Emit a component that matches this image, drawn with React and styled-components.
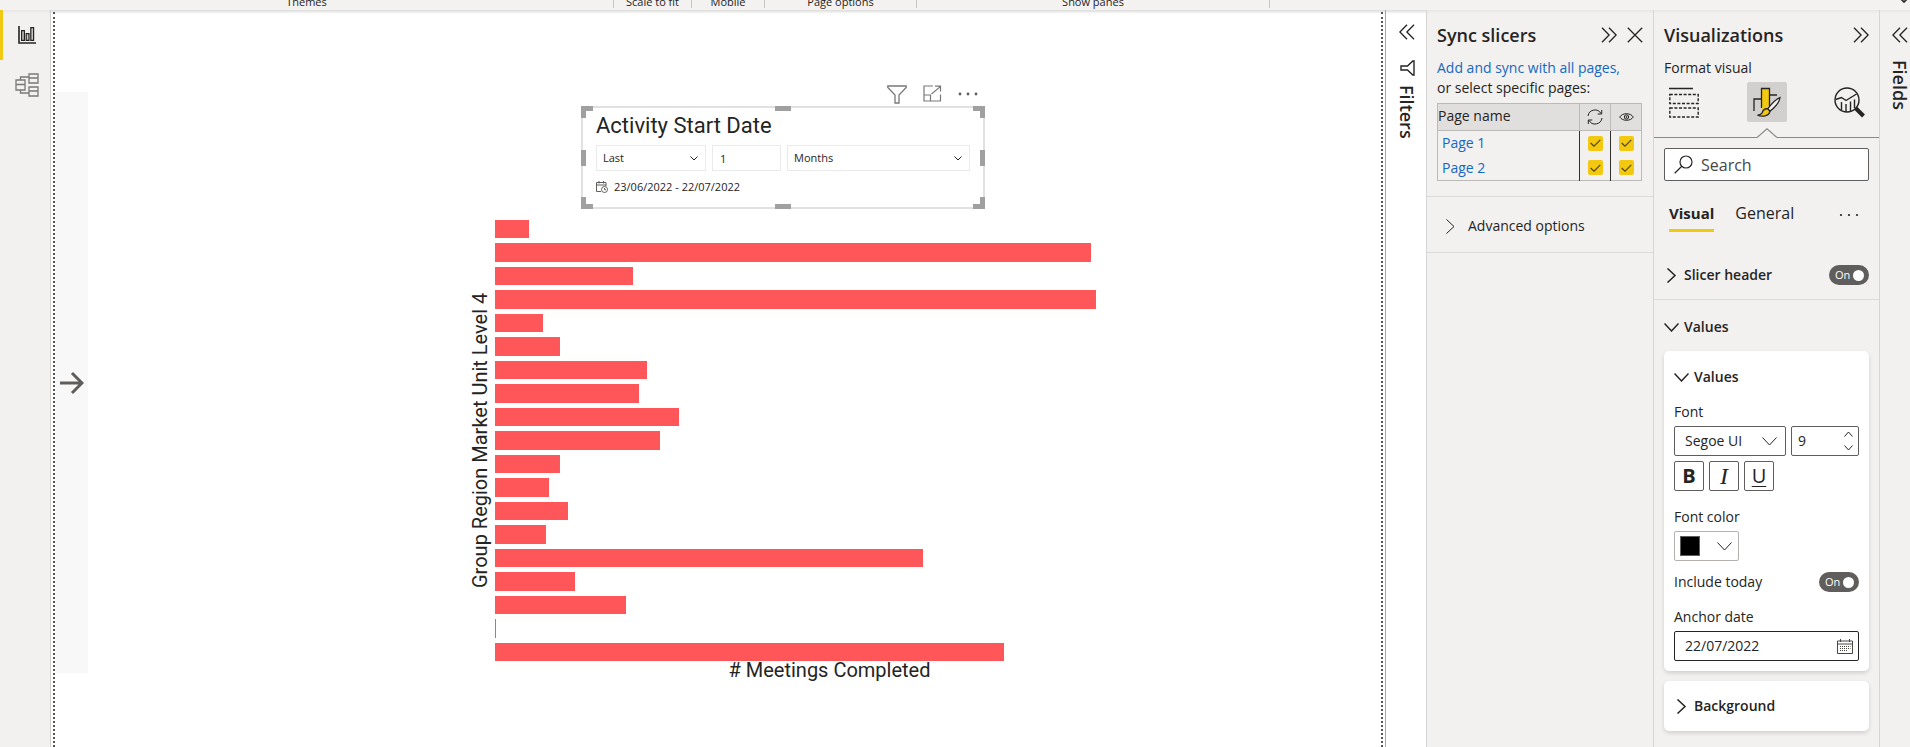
import React, { useState } from "react";
import styled, { createGlobalStyle, css } from "styled-components";

const GlobalStyle = createGlobalStyle`
  *, *::before, *::after { box-sizing: border-box; }
  body {
    margin: 0;
    background: #ffffff;
    color: #252423;
    font-family: "Open Sans", "Noto Sans", sans-serif;
    font-size: 14px;
    line-height: 20px;
  }
  button, input, select { font: inherit; color: inherit; }
  svg { display: block; fill: none; stroke: currentColor; }
`;

/* ---------- Shell ---------- */

const Shell = styled.div`
  display: flex;
  flex-direction: column;
  min-height: 100vh;
`;

const Ribbon = styled.header`
  display: flex;
  height: 10px;
  overflow: hidden;
  background: #f3f2f1;
  font-size: 11px;
  line-height: 12px;
`;

const RibbonGroup = styled.div`
  width: ${(p) => p.$width}px;
  height: 8px;
  display: flex;
  align-items: flex-end;
  justify-content: center;
  border-right: 1px solid #c8c6c4;
  white-space: nowrap;
`;

const RibbonToggle = styled.button`
  margin-left: auto;
  padding: 0 2px;
  height: 3px;
  border: 0;
  background: none;
`;

const Body = styled.div`
  flex: 1;
  display: flex;
  box-shadow: inset 0 4px 3px -2px #dcdbda;
`;

const IconButton = styled.button`
  display: grid;
  place-items: center;
  padding: 0;
  border: 0;
  background: none;
  color: ${(p) => p.$color || "#252423"};
`;

/* ---------- View switcher ---------- */

const ViewRail = styled.nav`
  flex: none;
  width: 51px;
  background: rgba(237, 235, 233, 0.7);
  border-right: 1px solid #d2d0ce;
`;

const ViewButton = styled.button`
  display: grid;
  place-items: center;
  width: 100%;
  height: 50px;
  padding: 0;
  border: 0;
  border-left: 3px solid ${(p) => (p.$active ? "#f2c811" : "transparent")};
  background: none;
  color: ${(p) => (p.$active ? "#252423" : "#7a7876")};
`;

/* ---------- Report canvas ---------- */

const Canvas = styled.main`
  flex: 1;
  min-width: 0;
  display: flex;
  margin: 2px 2px 0;
  border: 0 dotted #555555;
  border-width: 0 2px;
`;

const DrawerStrip = styled.aside`
  flex: none;
  display: grid;
  place-items: center;
  width: 33px;
  height: 581px;
  margin-top: 80px;
  background: #f8f8f8;
`;

const Report = styled.div`
  flex: 1;
  min-width: 0;
  padding: 70px 217px 0 383px;
`;

const Slicer = styled.section`
  width: 404px;
  margin-left: 110px;
`;

const VisualActions = styled.div`
  display: flex;
  justify-content: flex-end;
  gap: 16px;
  height: 24px;
  padding: 3px 7px 0 0;
  align-items: flex-start;
`;

const SlicerFrame = styled.div`
  position: relative;
  height: 103px;
  padding: 6px 13px 0;
  border: 2px solid #e1e1e1;
`;

const handleSpots = {
  nw: "left:-2px;top:-2px;border-width:5px 0 0 5px;width:12px;height:12px;",
  ne: "right:-2px;top:-2px;border-width:5px 5px 0 0;width:12px;height:12px;",
  sw: "left:-2px;bottom:-2px;border-width:0 0 5px 5px;width:12px;height:12px;",
  se: "right:-2px;bottom:-2px;border-width:0 5px 5px 0;width:12px;height:12px;",
  n: "left:calc(50% - 8px);top:-2px;border-width:5px 0 0;width:16px;height:5px;",
  s: "left:calc(50% - 8px);bottom:-2px;border-width:0 0 5px;width:16px;height:5px;",
  w: "left:-2px;top:calc(50% - 8px);border-width:0 0 0 5px;width:5px;height:16px;",
  e: "right:-2px;top:calc(50% - 8px);border-width:0 5px 0 0;width:5px;height:16px;",
};

const Handle = styled.span`
  position: absolute;
  border: 0 solid #a0a0a0;
  ${(p) => handleSpots[p.$at]}
`;

const SlicerTitle = styled.h2`
  margin: 0 0 7px;
  font: 400 22px/24px Roboto, sans-serif;
`;

const SlicerFields = styled.div`
  display: flex;
  gap: 6px;
  font-size: 11px;
`;

const SlicerRange = styled.div`
  display: flex;
  align-items: center;
  gap: 6px;
  margin-top: 6px;
  font-size: 11px;
`;

/* ---------- Shared form parts ---------- */

const boxLook = css`
  border: 1px solid ${(p) => p.$line || "#605e5c"};
  border-radius: ${(p) => (p.$flat ? 0 : 2)}px;
  background: #ffffff;
`;

const SelectBox = styled.div`
  display: grid;
  flex: ${(p) => (p.$width ? "none" : 1)};
  width: ${(p) => (p.$width ? `${p.$width}px` : "auto")};
  height: ${(p) => p.$height || 30}px;
  align-items: center;
  ${boxLook}
  > * { grid-area: 1 / 1; }
  > svg { justify-self: end; margin-right: ${(p) => (p.$flat ? 7 : 8)}px; pointer-events: none; }
`;

const Select = styled.select`
  appearance: none;
  width: 100%;
  height: 100%;
  padding: 0 20px 0 ${(p) => p.$inset || 6}px;
  border: 0;
  background: none;
`;

const TextBox = styled.input`
  width: ${(p) => p.$width}px;
  height: 26px;
  padding: 0 7px;
  ${boxLook}
`;

/* ---------- Bar chart ---------- */

const Chart = styled.figure`
  display: grid;
  grid-template-columns: 24px 1fr;
  grid-template-rows: 441px auto;
  margin: 11px 0 0;
  font: 400 20px/18px Roboto, sans-serif;
`;

const AxisY = styled.div`
  writing-mode: vertical-rl;
  transform: rotate(180deg);
  text-align: center;
`;

const AxisX = styled.figcaption`
  grid-column: 2;
  text-align: center;
`;

const Bars = styled.div`
  display: grid;
  grid-auto-rows: 1fr;
  gap: 5px;
`;

const Bar = styled.div`
  background: #ff5659;
`;

/* ---------- Panes ---------- */

const Rail = styled.aside`
  flex: none;
  display: flex;
  flex-direction: column;
  align-items: center;
  gap: ${(p) => p.$gap}px;
  width: ${(p) => p.$width}px;
  padding: ${(p) => p.$pad};
  border-left: 1px solid ${(p) => p.$line};
  background: ${(p) => p.$fill || "transparent"};
`;

const RailTitle = styled.h2`
  display: flex;
  align-items: center;
  gap: 9px;
  margin: 0;
  writing-mode: vertical-rl;
  font-size: 18px;
  font-weight: 600;
  line-height: 20px;
`;

const Pane = styled.aside`
  flex: none;
  width: ${(p) => p.$width}px;
  border-left: 1px solid #d8d6d4;
  background: rgba(237, 235, 233, 0.7);
`;

const PaneHead = styled.div`
  display: flex;
  align-items: center;
  gap: 10px;
  padding: 12px 10px 0;
  height: 38px;
`;

const PaneTitle = styled.h2`
  flex: 1;
  margin: 0;
  font-size: 18px;
  font-weight: 600;
  line-height: 24px;
`;

const Divided = styled.div`
  padding: ${(p) => p.$pad};
  border-bottom: 1px solid #dddbd9;
`;

const Section = styled.div`
  padding: 17px 10px 14px;
`;

const Link = styled.a`
  color: #1568c0;
  text-decoration: none;
`;

const PageTable = styled.table`
  width: 205px;
  margin-top: 5px;
  border: 1px solid #bcbab8;
  border-collapse: collapse;
  th, td { padding: 0; font-weight: 400; text-align: left; }
  th { height: 27px; background: #e1dfdd; vertical-align: middle; border-bottom: 1px solid #bcbab8; }
  th:first-child { padding-bottom: 3px; }
  th + th { width: 31px; border-left: 1px solid #bcbab8; }
  th svg, td label { margin: 0 auto; }
  td { height: 25px; padding-left: 4px; }
  td + td { padding: 0; border-left: 1px solid #33312f; }
`;

const Tick = styled.label`
  display: grid;
  place-items: center;
  width: 15px;
  height: 15px;
  > * { grid-area: 1 / 1; }
  > svg { z-index: 1; pointer-events: none; color: #4f420a; }
`;

const TickInput = styled.input`
  appearance: none;
  width: 15px;
  height: 15px;
  margin: 0;
  border-radius: 2px;
  background: #f2c811;
`;

const FoldButton = styled.button`
  display: flex;
  align-items: center;
  gap: ${(p) => p.$gap || 5}px;
  height: 20px;
  padding: 0;
  border: 0;
  background: none;
  font-weight: ${(p) => (p.$plain ? 400 : 600)};
  > svg { width: 15px; }
`;

const SubTitle = styled.h3`
  margin: 10px 10px 0;
  font-size: 14px;
  font-weight: 500;
  line-height: 20px;
`;

const ModeBar = styled.div`
  display: flex;
  justify-content: space-between;
  padding: 4px 10px 0;
`;

const ModeButton = styled.button`
  display: grid;
  place-items: center;
  width: 40px;
  height: 40px;
  padding: 0;
  border: 0;
  border-radius: 2px;
  background: ${(p) => (p.$active ? "#d2d0ce" : "none")};
`;

const Notch = styled.div`
  display: flex;
  align-items: flex-end;
  height: 16px;
  color: #8a8886;
  &::before, &::after { content: ""; flex: 1; border-bottom: 1px solid #8a8886; }
`;

const SearchBox = styled.label`
  display: flex;
  align-items: center;
  gap: 8px;
  height: 33px;
  margin: 10px 10px 0;
  padding: 0 9px;
  ${boxLook}
`;

const SearchInput = styled.input`
  flex: 1;
  min-width: 0;
  padding: 0;
  border: 0;
  background: none;
  font-size: 16px;
  &::placeholder { color: #484644; opacity: 1; }
`;

const Tabs = styled.div`
  display: flex;
  align-items: center;
  gap: 21px;
  margin: 20px 20px 0 15px;
  > :last-child { margin-left: auto; }
`;

const Tab = styled.button`
  height: 31px;
  padding: 0 0 4px;
  border: 0;
  border-bottom: 3px solid ${(p) => (p.$active ? "#f2c811" : "transparent")};
  background: none;
  font-size: ${(p) => (p.$active ? 15 : 16)}px;
  font-weight: ${(p) => (p.$active ? 700 : 400)};
  line-height: 24px;
`;

const Row = styled.div`
  display: flex;
  align-items: center;
  justify-content: ${(p) => (p.$spread ? "space-between" : "flex-start")};
  gap: 5px;
  margin-top: ${(p) => p.$top || 0}px;
`;

const Switch = styled.label`
  display: flex;
  align-items: center;
  justify-content: space-between;
  width: 40px;
  height: 20px;
  padding: 0 5px 0 6px;
  border-radius: 10px;
  background: #605e5c;
  color: #ffffff;
  font-size: 11px;
  line-height: 20px;
`;

const SwitchInput = styled.input`
  appearance: none;
  width: 11px;
  height: 11px;
  margin: 0;
  border-radius: 50%;
  background: #ffffff;
`;

const Card = styled.section`
  margin: 0 10px 10px;
  padding: ${(p) => p.$pad};
  border-radius: 5px;
  background: #ffffff;
  box-shadow: 0 2px 4px rgba(0, 0, 0, 0.14);
`;

const FieldLabel = styled.label`
  display: block;
  margin: ${(p) => p.$top || 0}px 0 4px;
`;

const Spinner = styled.div`
  display: flex;
  align-items: center;
  justify-content: space-between;
  flex: 1;
  min-width: 0;
  height: 30px;
  padding: 0 5px 0 6px;
  ${boxLook}
`;

const BareInput = styled.input`
  flex: 1;
  width: 20px;
  min-width: 0;
  padding: 0;
  border: 0;
  background: none;
`;

const StepButtons = styled.div`
  display: grid;
  gap: 8px;
`;

const StyleButton = styled.button`
  width: 30px;
  height: 30px;
  padding: 0;
  font-size: ${(p) => (p.$kind === "italic" ? 24 : 20)}px;
  line-height: 26px;
  ${boxLook}
  font-weight: ${(p) => (p.$kind === "bold" ? 700 : 400)};
  font-style: ${(p) => (p.$kind === "italic" ? "italic" : "normal")};
  font-family: ${(p) => (p.$kind === "italic" ? '"Liberation Serif", serif' : "inherit")};
  text-decoration: ${(p) => (p.$kind === "underline" ? "underline" : "none")};
  text-decoration-thickness: 1px;
  text-underline-offset: 3px;
`;

const ColorButton = styled.button`
  display: flex;
  align-items: center;
  justify-content: space-between;
  width: 65px;
  height: 30px;
  padding: 0 6px 0 5px;
  ${boxLook}
`;

const Swatch = styled.span`
  width: 20px;
  height: 20px;
  border: 1px solid #605e5c;
  background: #000000;
`;

const DateBox = styled.div`
  display: flex;
  align-items: center;
  height: 30px;
  padding: 0 5px 0 10px;
  ${boxLook}
`;

/* ---------- Icons ---------- */

const Chevron = ({ dir = "down", size = 15, weight = 1 }) => {
  const flat = dir === "down" || dir === "up";
  const w = flat ? size : Math.round(size / 2) + 1;
  const h = flat ? Math.round(size / 2) + 1 : size;
  const d = {
    down: `M.5 .5L${w / 2} ${h - 1}L${w - 0.5} .5`,
    up: `M.5 ${h - 0.5}L${w / 2} 1L${w - 0.5} ${h - 0.5}`,
    right: `M.5 .5L${w - 1} ${h / 2}L.5 ${h - 0.5}`,
  }[dir];
  return (
    <svg width={w} height={h} viewBox={`0 0 ${w} ${h}`} strokeWidth={weight} aria-hidden="true">
      <path d={d} />
    </svg>
  );
};

const DoubleChevron = ({ left }) => (
  <svg width="16" height="16" viewBox="0 0 16 16" strokeWidth="1.3" aria-hidden="true">
    <path d={left ? "M8 .7L.9 8L8 15.3M15 .7L7.9 8L15 15.3" : "M1 .7L8.1 8L1 15.3M8 .7L15.1 8L8 15.3"} />
  </svg>
);

const CloseIcon = () => (
  <svg width="16" height="16" viewBox="0 0 16 16" strokeWidth="1.3" aria-hidden="true">
    <path d="M.8 .8L15.2 15.2M15.2 .8L.8 15.2" />
  </svg>
);

const Dots = ({ height = 18, r = 1.4 }) => (
  <svg width="20" height={height} viewBox={`0 0 20 ${height}`} aria-hidden="true">
    <g fill="currentColor" stroke="none">
      <circle cx="2" cy="9" r={r} />
      <circle cx="10" cy="9" r={r} />
      <circle cx="18" cy="9" r={r} />
    </g>
  </svg>
);

const FunnelIcon = () => (
  <svg width="20" height="19" viewBox="0 0 20 19" strokeWidth="1.3" aria-hidden="true">
    <path d="M.8 1H19.2V2.4L12 10V18H8V10L.8 2.4Z" />
  </svg>
);

const FocusIcon = () => (
  <svg width="19" height="17" viewBox="0 0 19 17" strokeWidth="1.2" aria-hidden="true">
    <path d="M10 1H1V16H17.5V9.5M1 10H7.5V16M8.5 9L17.3 1.6M12 1.2H17.5V6.5" />
  </svg>
);

const SideFunnelIcon = () => (
  <svg width="15" height="16" viewBox="0 0 15 16" strokeWidth="1.4" aria-hidden="true">
    <path d="M14 1V15H12.8L7.5 10H1V6H7.5L12.8 1Z" />
  </svg>
);

const ReportIcon = () => (
  <svg width="18" height="18" viewBox="0 0 18 18" strokeWidth="1.2" aria-hidden="true">
    <path d="M1 0V17H18" strokeWidth="1.6" />
    <path fill="#c8c6c4" d="M3.6 4.6H6.4V14.4H3.6ZM8.2 7.6H11V14.4H8.2ZM12.8 1.6H15.6V14.4H12.8Z" />
  </svg>
);

const ModelIcon = () => (
  <svg width="24" height="24" viewBox="0 0 24 24" strokeWidth="1.3" aria-hidden="true">
    <path d="M1 7H10V17H1ZM1 11.5H10M14 1H23V10H14ZM14 5H23M14 14H23V23H14ZM14 18H23M5.5 7V4H14M5.5 17V20H14" />
  </svg>
);

const ArrowIcon = () => (
  <svg width="25" height="24" viewBox="0 0 25 24" strokeWidth="3" color="#605e5c" aria-hidden="true">
    <path d="M1 12H23M13 2L23 12L13 22" />
  </svg>
);

const CalendarClockIcon = () => (
  <svg width="12" height="12" viewBox="0 0 12 12" strokeWidth="1" color="#605e5c" aria-hidden="true">
    <path d="M5 10.5H.5V1.5H10V5M.5 4H10M3 0V2.5M7.5 0V2.5" />
    <circle cx="8.5" cy="8.5" r="3" />
    <path d="M8.5 7V8.7H10" />
  </svg>
);

const CalendarIcon = () => (
  <svg width="16" height="15" viewBox="0 0 16 15" strokeWidth="1" color="#484644" aria-hidden="true">
    <path d="M.5 2H15.5V14.5H.5ZM.5 5H15.5M3.5 0V3M12.5 0V3" />
    <path strokeDasharray="1 1" d="M3 7.5H13.5M3 9.5H13.5M3 11.5H11" />
  </svg>
);

const SyncIcon = () => (
  <svg width="16" height="16" viewBox="0 0 16 16" strokeWidth="1" aria-hidden="true">
    <path d="M1 7A7 7 0 0 1 14 4.5M14.7 1V5H10.7M15 9A7 7 0 0 1 2 11.5M1.3 15V11H5.3" />
  </svg>
);

const EyeIcon = () => (
  <svg width="15" height="10" viewBox="0 0 15 10" strokeWidth="1" aria-hidden="true">
    <path d="M.7 5C3.5 .6 11.5 .6 14.3 5C11.5 9.4 3.5 9.4 .7 5Z" />
    <circle cx="7.5" cy="5" r="2.2" />
    <circle cx="7.5" cy="5" r=".6" />
  </svg>
);

const CheckIcon = () => (
  <svg width="11" height="8" viewBox="0 0 11 8" strokeWidth="1.1" aria-hidden="true">
    <path d="M.7 4L4 7.2L10.3 .8" />
  </svg>
);

const SearchIcon = () => (
  <svg width="19" height="19" viewBox="0 0 19 19" strokeWidth="1.2" aria-hidden="true">
    <circle cx="12" cy="7" r="6" />
    <path d="M7.8 11.3L.7 18.3" />
  </svg>
);

const BuildIcon = () => (
  <svg width="30" height="31" viewBox="0 0 30 31" strokeWidth="1.4" aria-hidden="true">
    <path d="M0 1.5H24" strokeWidth="1.5" />
    <path strokeDasharray="3 1.6" d="M.8 7.5H29.2V16.5H.8ZM.8 21H29.2V30H.8Z" />
  </svg>
);

const FormatIcon = () => (
  <svg width="28" height="30" viewBox="0 0 28 30" strokeWidth="1.3" aria-hidden="true">
    <path d="M1 24V12H8M17 8H24" />
    <path fill="#f2c811" d="M8.5 21V1.5H16.5V19" />
    <path fill="#f2c811" stroke="none" d="M9 20H16L12 24L9 23Z" />
    <path fill="#f3f2f1" d="M27 10.5C23.5 11.5 18 17.5 14.6 21.8L17 24.2C21 21 26.5 15 27 10.5Z" />
    <path fill="#f2c811" d="M14.6 21.8C11 21.3 9.8 23.6 9.2 25.8C8 27.4 6.4 28.2 4.5 28.2C9 30 16 29.6 17 24.2Z" />
  </svg>
);

const AnalyticsIcon = () => (
  <svg width="31" height="31" viewBox="0 0 31 31" strokeWidth="1.4" aria-hidden="true">
    <circle cx="13" cy="13" r="12" />
    <path d="M1.5 12.5L7.5 10.5L12 13.5L22.5 7M7.5 15V23M12 17V25M16.5 14.5V24M20.5 12.5V21" />
    <path d="M21.5 21L29.5 29" strokeWidth="4" />
  </svg>
);

/* ---------- Page ---------- */

const ribbonGroups = [
  ["Themes", 614],
  ["Scale to fit", 78],
  ["Mobile", 73],
  ["Page options", 152],
  ["Show panes", 353],
];

const meetings = [34, 596, 138, 601, 48, 65, 152, 144, 184, 165, 65, 54, 73, 51, 428, 80, 131, 1, 509];
const axisMax = 669;

const TickBox = ({ label }) => {
  const [on, setOn] = useState(true);
  return (
    <Tick>
      <TickInput type="checkbox" aria-label={label} checked={on} onChange={() => setOn(!on)} />
      {on && <CheckIcon />}
    </Tick>
  );
};

const Toggle = ({ label }) => {
  const [on, setOn] = useState(true);
  return (
    <Switch>
      {on ? "On" : "Off"}
      <SwitchInput type="checkbox" role="switch" aria-label={label} checked={on} onChange={() => setOn(!on)} />
    </Switch>
  );
};

export default function App() {
  return (
    <Shell>
      <GlobalStyle />
      <Ribbon>
        {ribbonGroups.map(([name, width]) => (
          <RibbonGroup key={name} $width={width}>{name}</RibbonGroup>
        ))}
        <RibbonToggle aria-label="Collapse ribbon">
          <svg width="8" height="3" viewBox="0 0 8 3" strokeWidth="1.6"><path d="M1 -1L4 2L7 -1" /></svg>
        </RibbonToggle>
      </Ribbon>

      <Body>
        <ViewRail aria-label="Views">
          <ViewButton $active aria-label="Report view"><ReportIcon /></ViewButton>
          <ViewButton aria-label="Model view"><ModelIcon /></ViewButton>
        </ViewRail>

        <Canvas>
          <DrawerStrip>
            <IconButton aria-label="Open drawer"><ArrowIcon /></IconButton>
          </DrawerStrip>
          <Report>
            <Slicer>
              <VisualActions>
                <IconButton $color="#7a7876" aria-label="Filters on this visual"><FunnelIcon /></IconButton>
                <IconButton $color="#7a7876" aria-label="Focus mode"><FocusIcon /></IconButton>
                <IconButton $color="#605e5c" aria-label="More options"><Dots /></IconButton>
              </VisualActions>
              <SlicerFrame>
                {Object.keys(handleSpots).map((at) => <Handle key={at} $at={at} />)}
                <SlicerTitle>Activity Start Date</SlicerTitle>
                <SlicerFields>
                  <SelectBox $width={110} $height={26} $line="#eaeaea" $flat>
                    <Select aria-label="Direction"><option>Last</option></Select>
                    <Chevron size={8} />
                  </SelectBox>
                  <TextBox $width={69} $line="#eaeaea" $flat aria-label="Amount" defaultValue="1" />
                  <SelectBox $height={26} $line="#eaeaea" $flat>
                    <Select aria-label="Unit"><option>Months</option></Select>
                    <Chevron size={8} />
                  </SelectBox>
                </SlicerFields>
                <SlicerRange><CalendarClockIcon />23/06/2022 - 22/07/2022</SlicerRange>
              </SlicerFrame>
            </Slicer>

            <Chart>
              <AxisY>Group Region Market Unit Level 4</AxisY>
              <Bars>
                {meetings.map((value, i) => (
                  <Bar key={i} style={{ width: `${(value / axisMax) * 100}%` }} />
                ))}
              </Bars>
              <AxisX># Meetings Completed</AxisX>
            </Chart>
          </Report>
        </Canvas>

        <Rail $width={41} $gap={20} $pad="14px 0 0 2px" $line="#a8a6a4">
          <IconButton aria-label="Expand filters"><DoubleChevron left /></IconButton>
          <RailTitle><SideFunnelIcon />Filters</RailTitle>
        </Rail>

        <Pane $width={227}>
          <PaneHead>
            <PaneTitle>Sync slicers</PaneTitle>
            <IconButton aria-label="Collapse sync slicers"><DoubleChevron /></IconButton>
            <IconButton aria-label="Close sync slicers"><CloseIcon /></IconButton>
          </PaneHead>
          <Divided $pad="10px 10px 15px">
            <Link href="#all">Add and sync with all pages,</Link>
            <div>or select specific pages:</div>
            <PageTable>
              <thead>
                <tr>
                  <th>Page name</th>
                  <th aria-label="Sync"><SyncIcon /></th>
                  <th aria-label="Visible"><EyeIcon /></th>
                </tr>
              </thead>
              <tbody>
                {["Page 1", "Page 2"].map((page) => (
                  <tr key={page}>
                    <td><Link href="#page">{page}</Link></td>
                    <td><TickBox label={`Sync ${page}`} /></td>
                    <td><TickBox label={`Show on ${page}`} /></td>
                  </tr>
                ))}
              </tbody>
            </PageTable>
          </Divided>
          <Divided $pad="19px 16px 16px">
            <FoldButton $plain $gap={10}><Chevron dir="right" />Advanced options</FoldButton>
          </Divided>
        </Pane>

        <Pane $width={226}>
          <PaneHead>
            <PaneTitle>Visualizations</PaneTitle>
            <IconButton aria-label="Collapse visualizations"><DoubleChevron /></IconButton>
          </PaneHead>
          <SubTitle>Format visual</SubTitle>
          <ModeBar>
            <ModeButton aria-label="Build visual"><BuildIcon /></ModeButton>
            <ModeButton $active aria-label="Format visual"><FormatIcon /></ModeButton>
            <ModeButton aria-label="Analytics"><AnalyticsIcon /></ModeButton>
          </ModeBar>
          <Notch>
            <svg width="20" height="10" viewBox="0 0 20 10" strokeWidth="1.2"><path d="M0 9.5L10 .8L20 9.5" /></svg>
          </Notch>
          <SearchBox>
            <SearchIcon />
            <SearchInput type="search" aria-label="Search" placeholder="Search" />
          </SearchBox>
          <Tabs>
            <Tab $active>Visual</Tab>
            <Tab>General</Tab>
            <IconButton aria-label="More options"><Dots height={22} r={1.1} /></IconButton>
          </Tabs>
          <Divided $pad="33px 10px 14px">
            <Row $spread>
              <FoldButton><Chevron dir="right" weight={1.5} />Slicer header</FoldButton>
              <Toggle label="Slicer header" />
            </Row>
          </Divided>
          <Section>
            <FoldButton><Chevron weight={1.5} />Values</FoldButton>
          </Section>
          <Card $pad="16px 10px 10px">
            <FoldButton><Chevron weight={1.5} />Values</FoldButton>
            <FieldLabel htmlFor="font" $top={15}>Font</FieldLabel>
            <Row>
              <SelectBox $width={112}>
                <Select id="font" $inset={10}><option>Segoe UI</option></Select>
                <Chevron />
              </SelectBox>
              <Spinner>
                <BareInput aria-label="Font size" defaultValue="9" />
                <StepButtons>
                  <IconButton aria-label="Increase"><Chevron dir="up" size={9} /></IconButton>
                  <IconButton aria-label="Decrease"><Chevron size={9} /></IconButton>
                </StepButtons>
              </Spinner>
            </Row>
            <Row $top={5}>
              <StyleButton $kind="bold" aria-label="Bold">B</StyleButton>
              <StyleButton $kind="italic" aria-label="Italic">I</StyleButton>
              <StyleButton $kind="underline" aria-label="Underline">U</StyleButton>
            </Row>
            <FieldLabel htmlFor="font-color" $top={16}>Font color</FieldLabel>
            <ColorButton id="font-color" $line="#b3b0ad"><Swatch /><Chevron /></ColorButton>
            <Row $spread $top={11}>
              Include today
              <Toggle label="Include today" />
            </Row>
            <FieldLabel htmlFor="anchor" $top={15}>Anchor date</FieldLabel>
            <DateBox $line="#252423">
              <BareInput id="anchor" defaultValue="22/07/2022" />
              <IconButton aria-label="Pick a date"><CalendarIcon /></IconButton>
            </DateBox>
          </Card>
          <Card $pad="15px 10px">
            <FoldButton><Chevron dir="right" weight={1.5} />Background</FoldButton>
          </Card>
        </Pane>

        <Rail $width={31} $gap={17} $pad="17px 0 0 9px" $line="#d8d6d4" $fill="rgba(237, 235, 233, 0.7)">
          <IconButton aria-label="Expand fields"><DoubleChevron left /></IconButton>
          <RailTitle>Fields</RailTitle>
        </Rail>
      </Body>
    </Shell>
  );
}
